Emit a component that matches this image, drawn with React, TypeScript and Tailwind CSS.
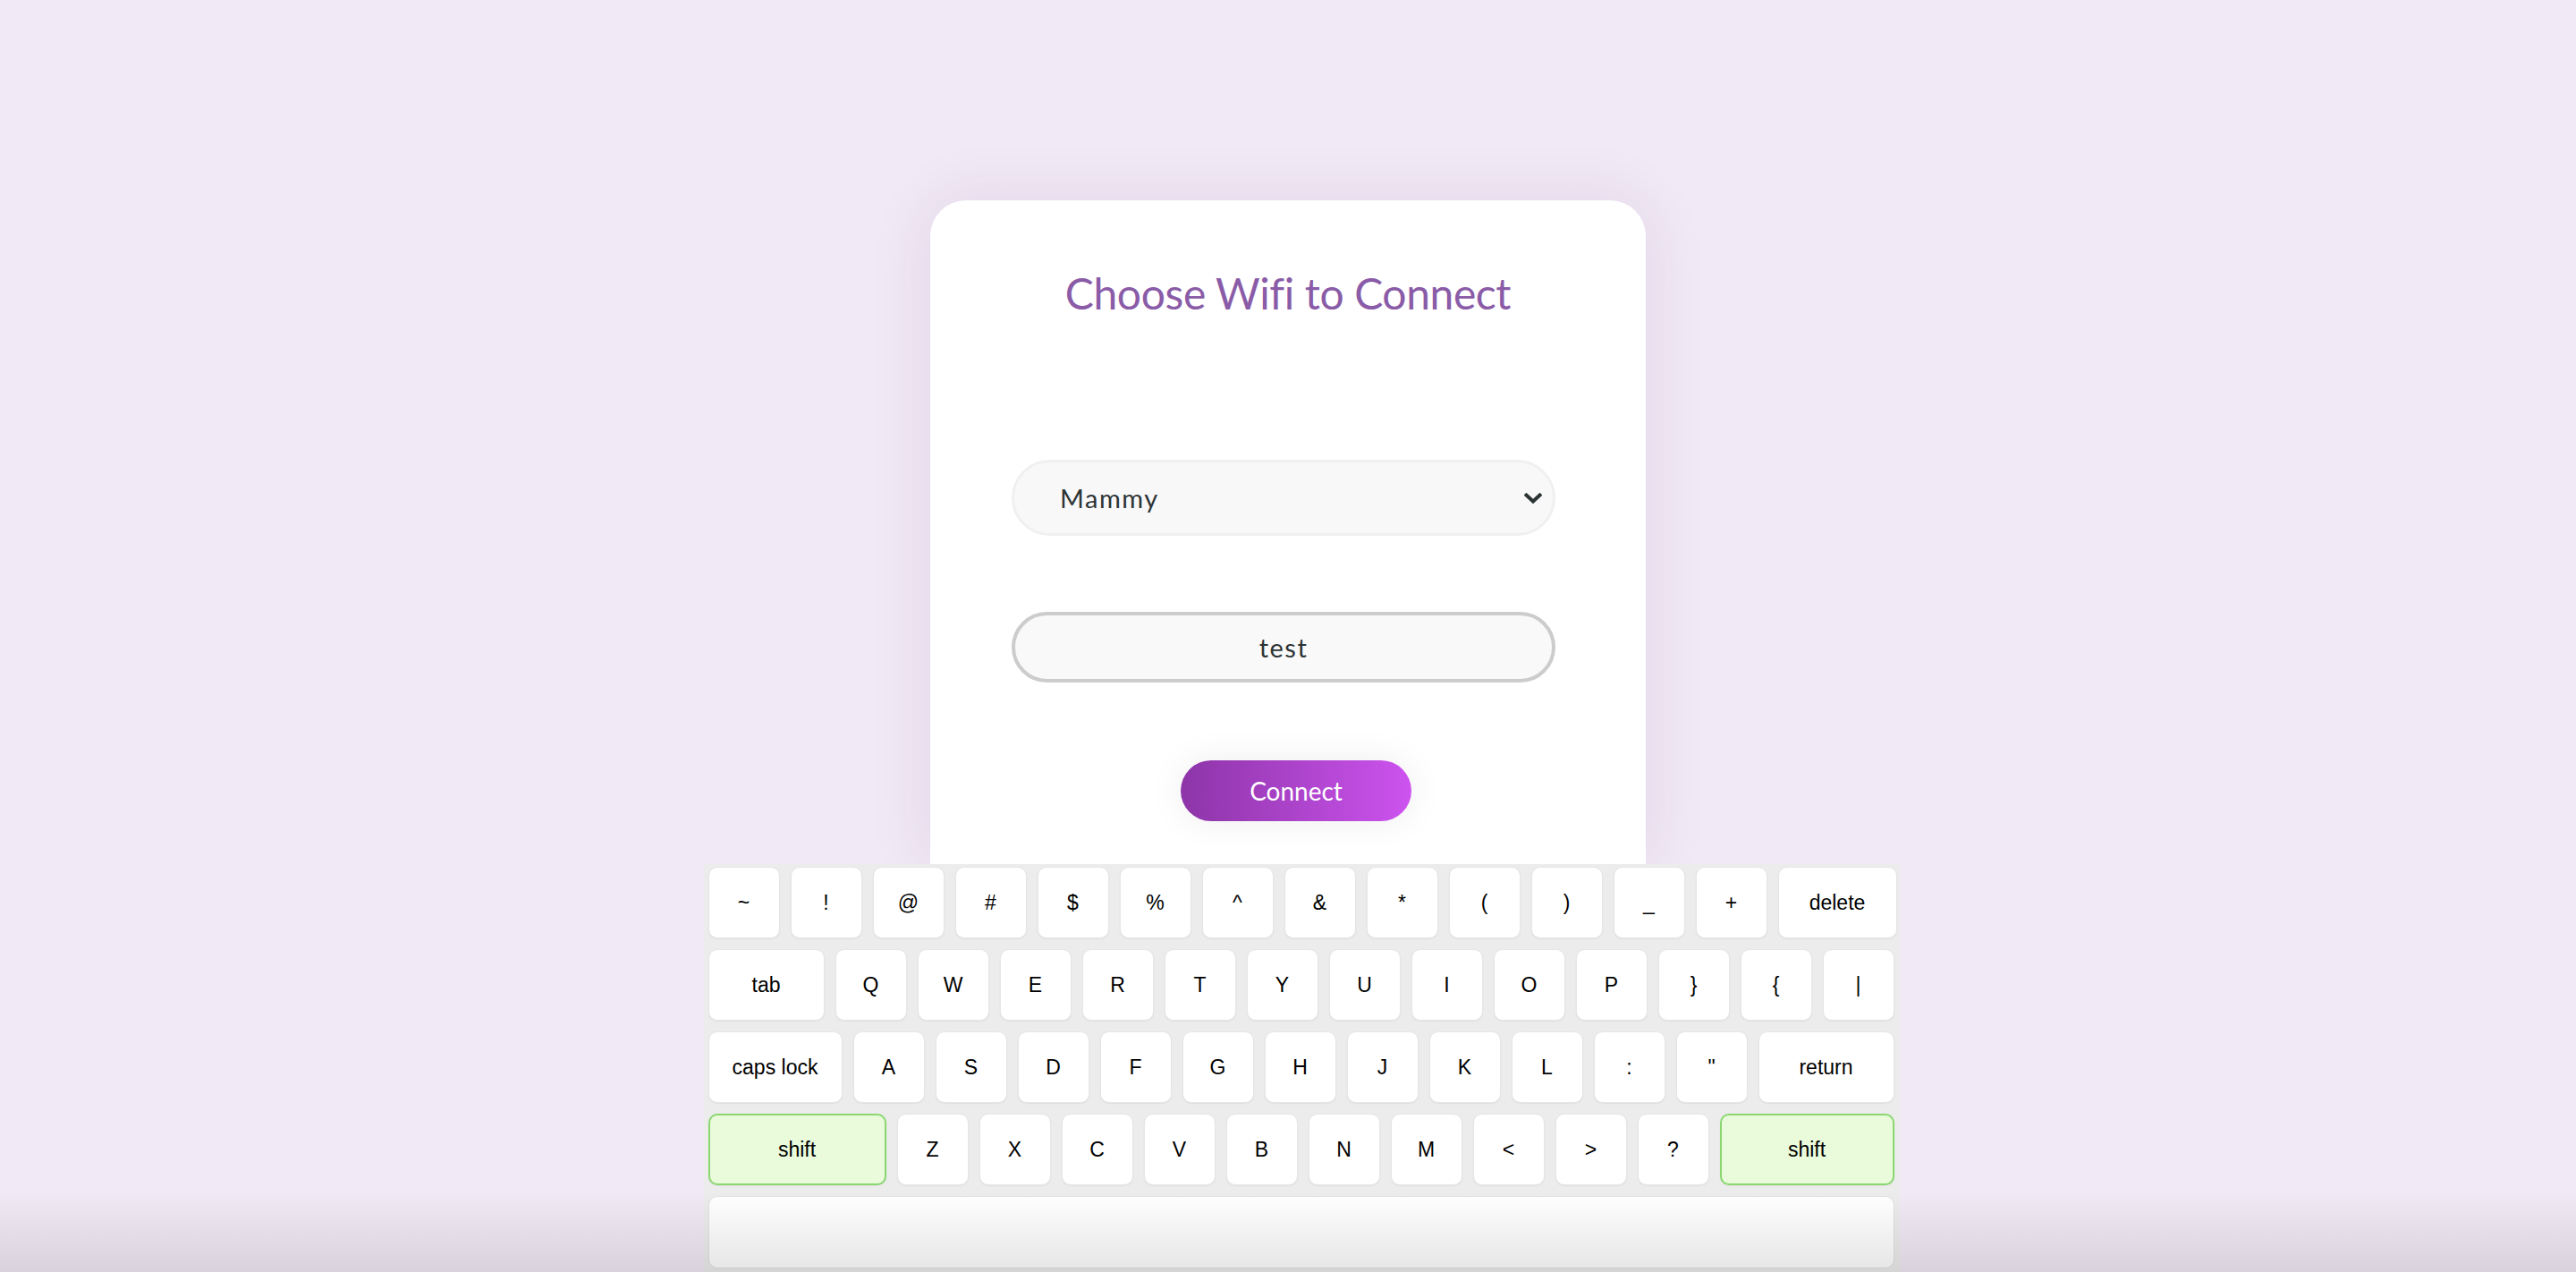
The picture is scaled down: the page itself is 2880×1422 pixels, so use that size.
import React from "react";

const rows: string[][] = [
  ["~", "!", "@", "#", "$", "%", "^", "&", "*", "(", ")", "_", "+", "delete"],
  ["tab", "Q", "W", "E", "R", "T", "Y", "U", "I", "O", "P", "}", "{", "|"],
  ["caps lock", "A", "S", "D", "F", "G", "H", "J", "K", "L", ":", '"', "return"],
  ["shift", "Z", "X", "C", "V", "B", "N", "M", "<", ">", "?", "shift"],
];

const wide: Record<string, string> = {
  delete: "flex-1",
  tab: "w-[130px]",
  "caps lock": "w-[150px]",
  return: "w-[152px]",
};

function Key({ label, first }: { label: string; first: boolean }) {
  const isShift = label === "shift";
  let size = wide[label] ?? "w-[80px]";
  if (isShift) size = first ? "w-[199px]" : "w-[195px]";
  const tone = isShift
    ? "bg-[#eafbdc] border-2 border-[#8ad86f]"
    : "bg-white border border-[#e6e6e6]";
  return (
    <div
      className={`${size} ${tone} h-[80px] shrink-0 rounded-[10px] flex items-center justify-center text-[23px] text-black shadow-[0_1px_2px_rgba(0,0,0,0.06)]`}
    >
      {label}
    </div>
  );
}

export default function App() {
  return (
    <div className="relative h-[1422px] w-full overflow-hidden bg-[#f1e9f5] font-['Liberation_Sans',sans-serif]">
      <div className="flex flex-col items-center pt-[224px]">
        <div className="w-[800px] h-[742px] rounded-t-[40px] bg-white shadow-[0_0_70px_rgba(90,40,110,0.10)] flex flex-col pt-[80px] font-['Lato',sans-serif]">
          <h1 className="text-center text-[48px] leading-none tracking-[-0.4px] text-[#8a5ca8]">
            Choose Wifi to Connect
          </h1>

          <div className="ml-[91px] mt-[162px] w-[608px] h-[85px] rounded-full border-[3px] border-[#f0f0f0] bg-[#f8f8f8] flex items-center justify-between pl-[51px] pr-[12px]">
            <span className="text-[29px] tracking-[1.5px] text-[#2d3436]">Mammy</span>
            <svg width="20" height="12" viewBox="0 0 20 12" className="text-[#2d3436]">
              <path
                d="M2.5 2.5 L10 9.5 L17.5 2.5"
                fill="none"
                stroke="currentColor"
                strokeWidth="4"
                strokeLinecap="square"
              />
            </svg>
          </div>

          <div className="ml-[91px] mt-[85px] w-[608px] h-[79px] rounded-full border-4 border-[#cccccc] bg-[#f9f9f9] flex items-center justify-center">
            <span className="text-[29px] tracking-[1.5px] text-[#2d3436]">test</span>
          </div>

          <div className="mt-[87px] flex justify-center pl-[18px]">
            <button className="w-[258px] h-[68px] rounded-full bg-gradient-to-r from-[#8d35a8] to-[#cd53ef] text-white text-[28px] shadow-[0_0_40px_rgba(0,0,0,0.07)]">
              Connect
            </button>
          </div>
        </div>

        <div className="ml-[30px] w-[1337px] bg-[#ececec] pl-[5px] pr-[3px] pt-[3px] pb-[10px] flex flex-col gap-[12px]">
          {rows.map((row, i) => (
            <div key={i} className="flex gap-[12px]">
              {row.map((k, j) => (
                <Key key={j} label={k} first={j === 0} />
              ))}
            </div>
          ))}
          <div className="h-[81px] w-[1326px] rounded-[10px] bg-white border border-[#e0e0e0]" />
        </div>
      </div>

      <div className="pointer-events-none absolute inset-x-0 bottom-0 h-[90px] bg-gradient-to-b from-transparent to-black/10" />
    </div>
  );
}
